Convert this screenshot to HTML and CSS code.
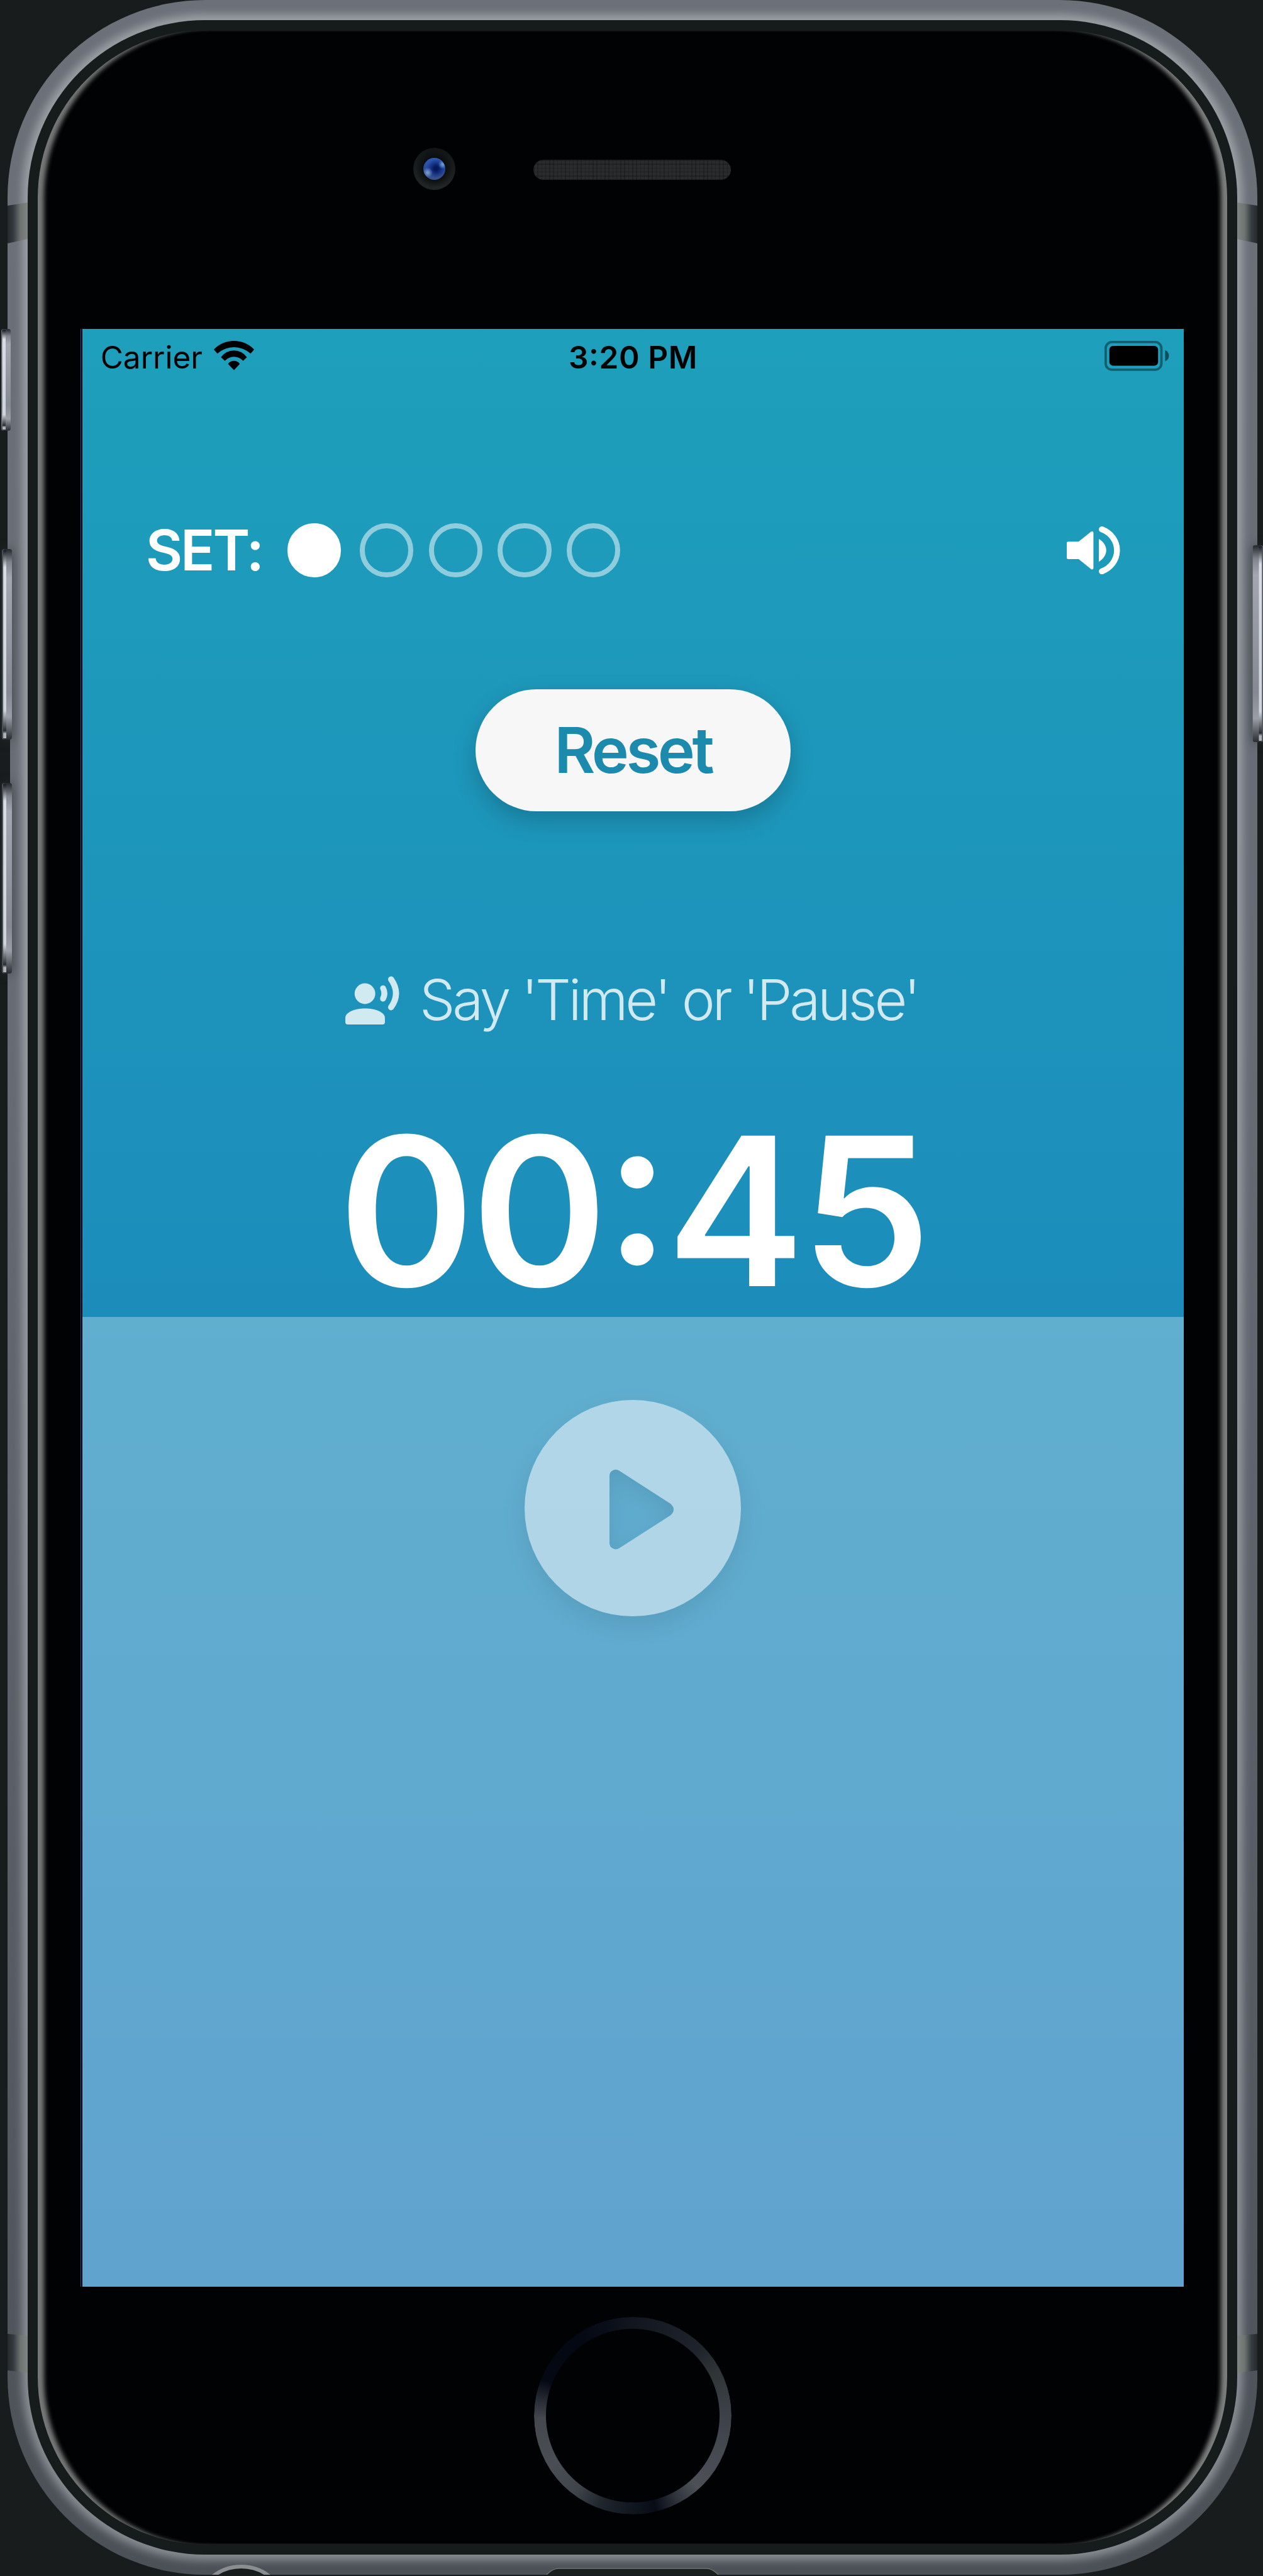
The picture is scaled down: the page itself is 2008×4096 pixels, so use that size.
FILE: index.html
```html
<!DOCTYPE html>
<html lang="en">
<head>
<meta charset="utf-8">
<title>Set timer</title>
<link rel="stylesheet" href="styles.css">
</head>
<body>
<div class="device">
  <div class="frame">
    <div class="bezel">
      <div class="glass">
        <div class="forehead">
          <div class="camera"><div class="lens"></div></div>
          <div class="earpiece"></div>
        </div>
        <main class="screen">
          <section class="upper">
            <header class="status">
              <div class="carrier">
                <span class="carrier-name">Carrier</span>
                <svg class="wifi" viewBox="0 0 64 46.5"><path d="M0 13.8A44 44 0 0 1 64 13.8L58.4 20.3A39 39 0 0 0 5.6 20.3Z"/><path d="M11.3 25.9A25.2 25.2 0 0 1 52.5 25.9L46.5 31.7A19.6 19.6 0 0 0 17.5 31.7Z"/><path d="M22.6 36.8A11 11 0 0 1 41.2 36.8L32 46.5Z"/></svg>
              </div>
              <span class="clock">3:20 PM</span>
              <svg class="battery" viewBox="0 0 103 48"><rect x="1.9" y="1.9" width="88.6" height="44" rx="10" fill="none" stroke="#000" stroke-opacity=".4" stroke-width="3.8"/><rect x="7.7" y="8" width="77.5" height="31.4" rx="6"/><path d="M96.4 14.8Q102.4 17.5 102.4 23.8T96.4 32.6Z" fill-opacity=".5"/></svg>
            </header>
            <div class="sets">
              <span class="sets-label">SET:</span>
              <span class="dot done"></span>
              <span class="dot"></span><span class="dot"></span><span class="dot"></span><span class="dot"></span>
              <svg class="volume" viewBox="0 0 85 76.2"><path d="M2.2 26.4H19.6L40.2 10V66.2L19.6 49.8H2.2Z" fill="#fff" stroke="#fff" stroke-width="4.4" stroke-linejoin="round"/><path d="M51 20.1C58 24 62.8 31 62.8 38.1S58 52.2 51 56.2Z" fill="#fff"/><path d="M55.8 4.7C70 10 79.9 23 79.9 38.1S70 66.2 55.8 71.5" fill="none" stroke="#fff" stroke-width="9.4" stroke-linecap="round"/></svg>
            </div>
            <button class="reset">Reset</button>
            <div class="hint">
              <svg class="voice" viewBox="0 0 86 77"><g fill="#fff"><circle cx="31.2" cy="28" r="16.4"/><path d="M0 67C0 57 16 51.6 31.5 51.6S63 57 63 67V73Q63 77 59 77H4Q0 77 0 73Z"/></g><g fill="none" stroke="#fff" stroke-linecap="round"><path d="M60 19.4Q64.4 27.6 60 35.8" stroke-width="9.4"/><path d="M72.8 5.2Q88.4 27.5 72.8 49.6" stroke-width="9.6"/></g></svg>
              <span class="hint-text">Say 'Time' or 'Pause'</span>
            </div>
            <div class="timer">00:45</div>
          </section>
          <section class="lower">
            <svg class="play" viewBox="0 0 344 344"><path fill="#fff" fill-rule="evenodd" d="M172 0A172 172 0 1 1 172 344A172 172 0 1 1 172 0ZM135 121V227A10 10 0 0 0 150.500 235.700L232 183.500Q242 174 232 165L150.500 112.500A10 10 0 0 0 135 121Z"/></svg>
          </section>
        </main>
        <div class="chin"><div class="home"></div></div>
      </div>
    </div>
    <div class="band top left"></div>
    <div class="band top right"></div>
    <div class="band bottom left"></div>
    <div class="band bottom right"></div>
    <div class="jack"></div>
    <svg class="port" viewBox="0 0 275 12"><path d="M0 12Q10 1 20 1H255Q265 1 275 12Z" fill="#1b201f" stroke="#6e7271" stroke-width="1.500"/></svg>
  </div>
  <div class="notch"></div>
  <div class="key mute"></div>
  <div class="key volume-up"></div>
  <div class="key volume-down"></div>
  <div class="key power"></div>
</div>
</body>
</html>
```
FILE: styles.css
```css
* { box-sizing: border-box; }
body { margin: 0; background: #181c1c; font-family: Inter, "Liberation Sans", sans-serif; }
svg { display: block; }

.device { position: relative; width: 2008px; height: 4096px; overflow: hidden; background: #181c1c; }

/* Metal shell, seal and glass */
.frame {
  position: relative;
  width: 1987px;
  height: 4093.8px;
  margin-left: 11.8px;
  padding: 32.2px;
  border-radius: 314px;
  overflow: hidden;
  background: linear-gradient(#6c7078, #676b74 40%, #4c5057);
}
.bezel {
  height: 100%;
  padding: 15.900px;
  border-radius: 282px;
  background: #161b1b;
  box-shadow: 0 0 14px 9px rgba(225, 232, 236, .4);
}
.glass {
  display: flex;
  flex-direction: column;
  height: 100%;
  padding: 0 68.800px 0 70.800px;
  border-radius: 266px;
  background: #000203;
  box-shadow: inset 14px 0 7px -4px #757877, inset -14px 0 7px -4px #7b7e7d;
}
.forehead { display: flex; align-items: flex-start; height: 475px; padding: 187px 0 0 526.400px; }
.camera {
  display: flex;
  align-items: center;
  justify-content: center;
  width: 67px;
  height: 67px;
  border-radius: 50%;
  background: radial-gradient(circle, #060808 28%, transparent 62%), linear-gradient(#121516, #222626);
}
.lens {
  width: 35px;
  height: 35px;
  border-radius: 50%;
  background:
    radial-gradient(circle at 20% 67%, #7ea2cf, transparent 22%),
    radial-gradient(circle at 88% 30%, #6fa4d8, transparent 18%),
    radial-gradient(circle at 58% 48%, #061a5c 12%, rgba(14, 39, 124, .6) 34%, transparent 55%),
    linear-gradient(#3058b4, #284a9c 50%, #3a5288);
}
.earpiece {
  width: 314px;
  height: 32.400px;
  margin: 18.500px 0 0 124px;
  border-radius: 16px;
  background:
    repeating-linear-gradient(90deg, rgba(0, 0, 0, .22) 0 1.500px, transparent 1.500px 6.280px),
    repeating-linear-gradient(rgba(0, 0, 0, .22) 0 1.500px, transparent 1.500px 6.280px),
    #2a2b2d;
}

/* App */
.screen {
  height: 3113px;
  background: linear-gradient(#1e9fbb, #1c8dbb 50%, #1c7bba);
  box-shadow: -2px 0 0 #000, -3px 0 0 #24509a;
}
.upper { display: flex; flex-direction: column; align-items: center; height: 1570.500px; color: #fff; }
.status {
  display: grid;
  grid-template-columns: 1fr auto 1fr;
  align-items: center;
  align-self: stretch;
  height: 89px;
  padding: 0 22.500px 0 29px;
  color: #000;
  font-size: 49.500px;
  line-height: 50px;
}
.carrier { display: flex; align-items: center; gap: 18px; }
.wifi { width: 64px; height: 46.500px; margin-bottom: 4px; }
.clock { margin: 0 3px 0 -3px; font-weight: 600; letter-spacing: .6px; font-feature-settings: "calt" 1; }
.battery { width: 103px; height: 48px; margin-bottom: 3px; justify-self: end; }

.sets { display: flex; align-items: center; align-self: stretch; height: 86px; margin-top: 220px; padding: 0 101.400px 0 101px; }
.sets-label { width: 225.600px; font-size: 90px; font-weight: 600; line-height: 86px; letter-spacing: -3.200px; font-feature-settings: "calt" 0; }
.dot { width: 85.200px; height: 85.200px; margin-right: 24.700px; border: 8.500px solid rgba(255, 255, 255, .5); border-radius: 50%; }
.dot.done { margin-right: 29.200px; border-color: #fff; background: #fff; }
.volume { width: 85px; height: 76.200px; margin-left: auto; }

.reset {
  width: 501.500px;
  height: 194px;
  margin: 178px 0 0;
  padding: 0;
  border: 0;
  border-radius: 97px;
  background: #f7f7f7;
  color: #1c8aac;
  font: 600 100px/194px Inter, "Liberation Sans", sans-serif;
  letter-spacing: -4.500px;
  box-shadow: 0 14px 38px rgba(0, 0, 0, .2);
}
.hint { display: flex; align-items: center; margin: 255.300px 5px 0 0; opacity: .8; }
.voice { width: 86px; height: 77px; margin-right: 32.500px; }
.hint-text { font-size: 89.500px; font-weight: 300; line-height: 90px; letter-spacing: -4.250px; white-space: nowrap; }
.timer { margin-top: 125px; font-size: 329px; font-weight: 600; line-height: 330px; letter-spacing: -5.600px; font-feature-settings: "calt" 1; white-space: nowrap; }

.lower { display: flex; justify-content: center; height: 1542.500px; padding-top: 132.400px; background: rgba(255, 255, 255, .3); }
.play { width: 344px; height: 344px; opacity: .5; overflow: visible; filter: drop-shadow(0 14px 19px rgba(0, 0, 0, .17)); }

.chin { display: flex; justify-content: center; padding-top: 47.500px; }
.home {
  width: 314px;
  height: 314px;
  border-radius: 50%;
  background: conic-gradient(#12171f, #1f242c 45deg, #2f3536 62deg, #3c4148 88deg, #484b53 120deg, #4d5057 138deg, #2f343c 152deg, #070c17 166deg, #12181f 182deg, #20262d 200deg, #3f444b 217deg, #4a4d54 238deg, #45484f 268deg, #262a32 280deg, #040813 292deg, #040813 325deg, #090f18 345deg, #12171f);
  -webkit-mask: radial-gradient(circle, transparent 137.500px, #000 138.500px);
  mask: radial-gradient(circle, transparent 137.500px, #000 138.500px);
}

/* Antenna lines across the shell */
.band { position: absolute; width: 32.200px; height: 65px; background: linear-gradient(90deg, #25292d, #363b41 30%, #6f7473 65%, #808483); }
.band.left { left: 0; }
.band.right { right: 0; transform: scaleX(-1); }
.band.top { top: 322px; clip-path: polygon(0 5px, 100% 0, 100% 58px, 0 100%); }
.band.bottom { top: 3711px; height: 62px; clip-path: polygon(0 0, 100% 3px, 100% 100%, 0 58px); }

.jack { position: absolute; left: 296.500px; top: 4077.500px; width: 151px; height: 151px; border: 6px solid #8b8e91; border-radius: 50%; background: #171b1b; }
.port { position: absolute; left: 856.200px; top: 4083px; width: 275px; height: 12px; }

/* Side keys */
.key {
  position: absolute;
  left: 2.500px;
  width: 16px;
  height: 303px;
  border-radius: 3px 4px 4px 3px;
  background:
    linear-gradient(#181c22, #d9dce4 9%, #cfd3db 85%, #2a2d33 96%, #b0b2b6 97.500%) 2px 2px / 5px calc(100% - 4px) no-repeat,
    linear-gradient(#23262b, #82858d 7%, #a4a7af 15%, #868991 75%, #9b9ea6 88%, #2a2d32);
  box-shadow: inset 2px 0 1px #4a4e56, 2px 0 16px rgba(50, 55, 60, .6);
}
.mute { left: 2px; top: 523px; width: 14.700px; height: 162px; box-shadow: inset 1px 0 1px #6a6e76; }
.volume-up { top: 873px; }
.volume-down { top: 1245px; }
.power { left: 1991.500px; top: 867px; width: 16.500px; height: 313px; transform: scaleX(-1); }
.notch { position: absolute; left: 11px; top: 1170px; width: 5px; height: 82px; background: #181c1c; }
```
